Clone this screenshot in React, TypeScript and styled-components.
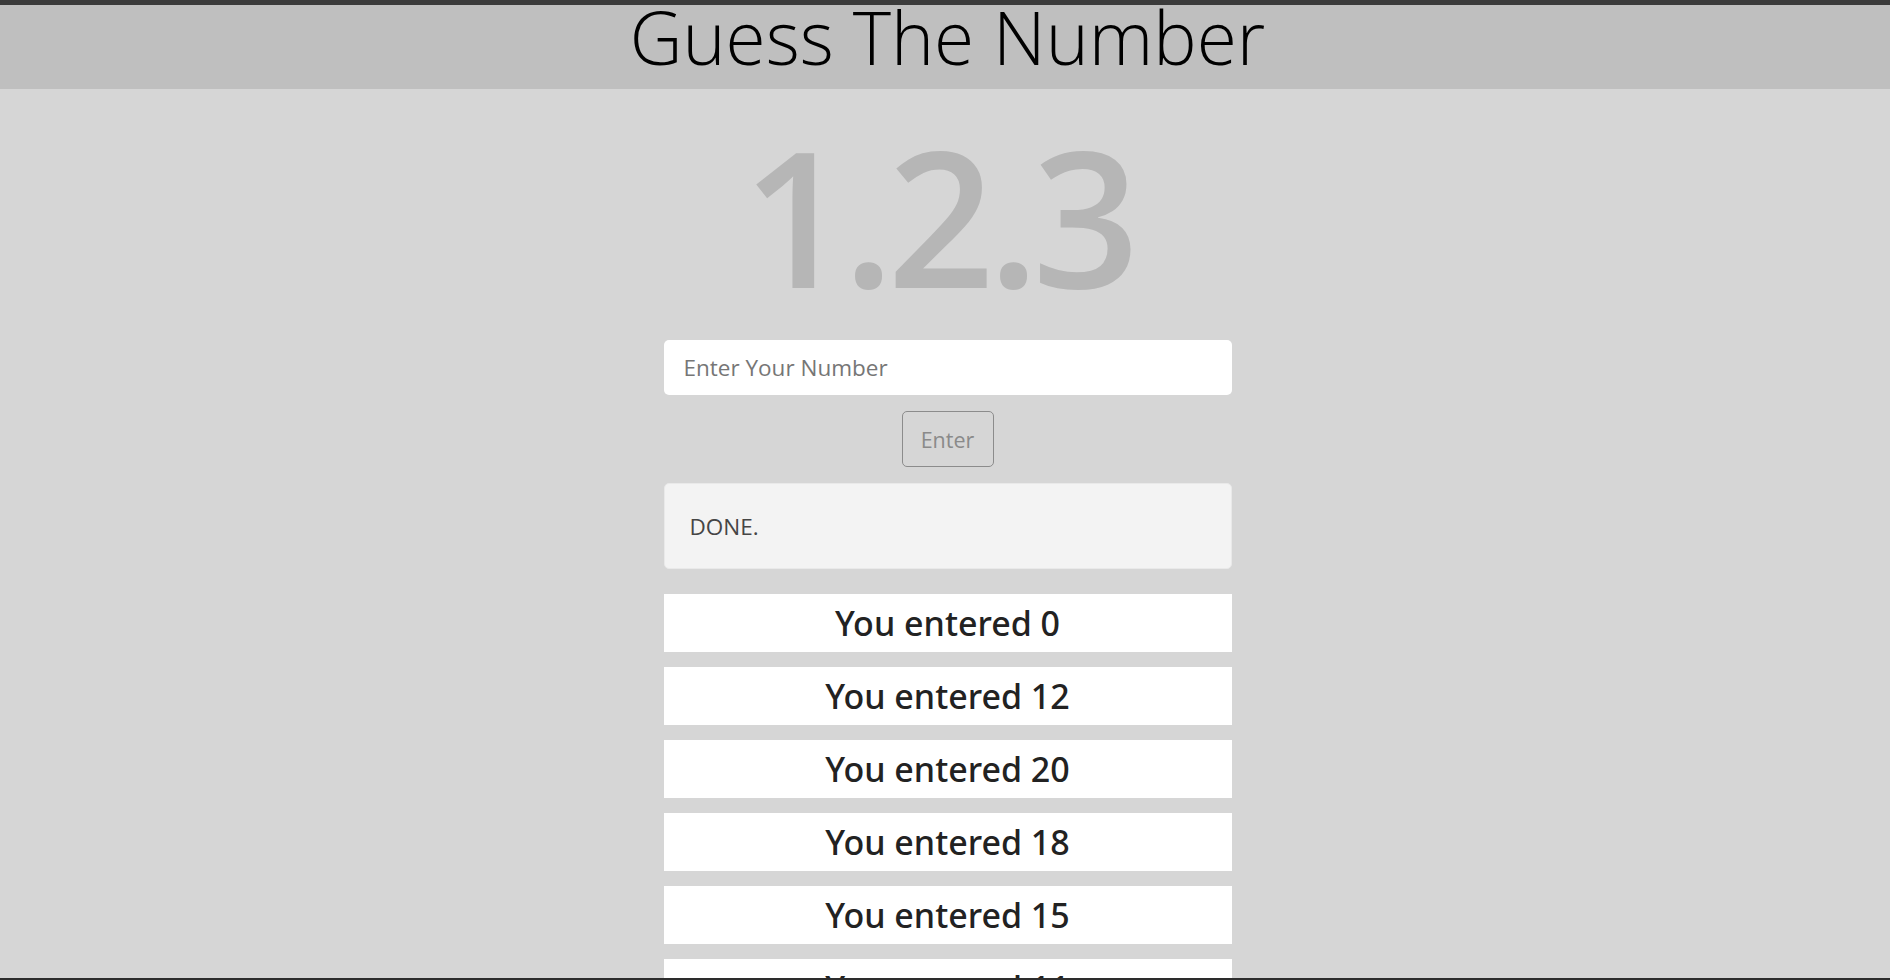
import React from "react";
import styled, { createGlobalStyle } from "styled-components";

const GlobalStyle = createGlobalStyle`
  html, body {
    margin: 0;
    padding: 0;
    height: 100%;
  }
  body {
    background: #d6d6d6;
    font-family: "Open Sans", "Noto Sans", sans-serif;
    color: #212529;
    overflow: hidden;
  }
`;

const Page = styled.div`
  height: 100vh;
  display: flex;
  flex-direction: column;
  overflow: hidden;
`;

const TopStrip = styled.div`
  height: 5px;
  flex-shrink: 0;
  background: #3b3b3b;
`;

const BottomStrip = styled.div`
  height: 2px;
  flex-shrink: 0;
  background: #2d2d2d;
`;

const Header = styled.header`
  height: 84px;
  flex-shrink: 0;
  box-sizing: border-box;
  padding-left: 5px;
  background: #bfbfbf;
  display: flex;
  justify-content: center;
  align-items: flex-start;
`;

const Title = styled.h1`
  margin: 0;
  font-size: 73px;
  font-weight: 300;
  line-height: 63px;
  color: #000;
`;

const Main = styled.main`
  flex: 1;
  min-height: 0;
  overflow: hidden;
  box-sizing: border-box;
  padding-left: 5px;
  display: flex;
  flex-direction: column;
  align-items: center;
`;

const Version = styled.div`
  margin-top: 32px;
  padding-right: 20px;
  font-size: 188px;
  font-weight: 600;
  line-height: 188px;
  letter-spacing: -7px;
  color: #b6b6b6;
`;

const Panel = styled.div`
  width: 568px;
  margin-top: 31px;
  display: flex;
  flex-direction: column;
  align-items: center;
`;

const NumberInput = styled.input`
  box-sizing: border-box;
  width: 100%;
  height: 55px;
  border: none;
  border-radius: 5px;
  background: #fff;
  padding: 0 20px;
  font-family: inherit;
  font-size: 22.5px;
  color: #495057;
  outline: none;
  &::placeholder {
    color: #767676;
  }
`;

const EnterButton = styled.button`
  box-sizing: border-box;
  margin-top: 16px;
  width: 92px;
  height: 56px;
  border: 1px solid #8c8c8c;
  border-radius: 5px;
  background: transparent;
  font-family: inherit;
  font-size: 21.5px;
  color: #8a8a8a;
  cursor: pointer;
`;

const Alert = styled.div`
  box-sizing: border-box;
  margin-top: 16px;
  width: 100%;
  height: 86px;
  display: flex;
  align-items: center;
  padding: 0 25px;
  background: #f3f3f3;
  border: 1px solid #e9e9e9;
  border-radius: 5px;
  font-size: 22.5px;
  color: #454545;
`;

const Guesses = styled.ul`
  list-style: none;
  margin: 25px 0 0;
  padding: 0;
  width: 100%;
  display: flex;
  flex-direction: column;
  gap: 15px;
`;

const Guess = styled.li`
  height: 58px;
  flex-shrink: 0;
  background: #fff;
  display: flex;
  align-items: center;
  justify-content: center;
  font-family: "Noto Sans", "Open Sans", sans-serif;
  font-size: 34px;
  font-weight: 500;
  color: #222;
`;

const guesses = [0, 12, 20, 18, 15, 11];

export default function App() {
  return (
    <>
      <GlobalStyle />
      <Page>
        <TopStrip />
        <Header>
          <Title>Guess The Number</Title>
        </Header>
        <Main>
          <Version>1.2.3</Version>
          <Panel>
            <NumberInput placeholder="Enter Your Number" />
            <EnterButton>Enter</EnterButton>
            <Alert>DONE.</Alert>
            <Guesses>
              {guesses.map((g, i) => (
                <Guess key={i}>You entered {g}</Guess>
              ))}
            </Guesses>
          </Panel>
        </Main>
        <BottomStrip />
      </Page>
    </>
  );
}
